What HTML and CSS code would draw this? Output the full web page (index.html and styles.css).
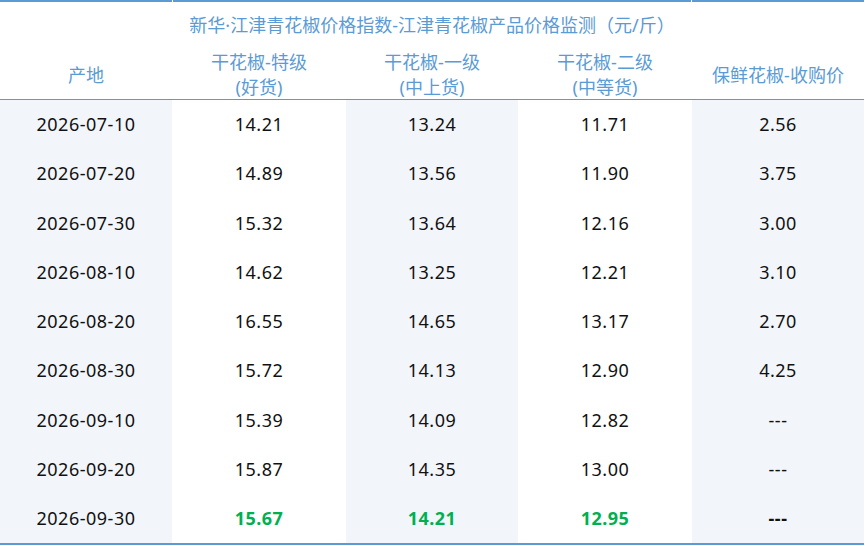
FILE: index.html
```html
<!DOCTYPE html>
<html lang="zh">
<head>
<meta charset="utf-8">
<link rel="stylesheet" href="styles.css">
</head>
<body>
<div class="table">
  <div class="head">
    <div class="hc h-origin">产地</div>
    <div class="hc h-title">新华·江津青花椒价格指数-江津青花椒产品价格监测（元/斤）</div>
    <div class="hc h-last">保鲜花椒-收购价</div>
    <div class="hc h-sub c2">干花椒-特级<br>(好货)</div>
    <div class="hc h-sub c3">干花椒-一级<br>(中上货)</div>
    <div class="hc h-sub c4">干花椒-二级<br>(中等货)</div>
  </div>
  <div class="body">
    <div class="c alt">2026-07-10</div><div class="c">14.21</div><div class="c alt">13.24</div><div class="c">11.71</div><div class="c alt">2.56</div>
    <div class="c alt">2026-07-20</div><div class="c">14.89</div><div class="c alt">13.56</div><div class="c">11.90</div><div class="c alt">3.75</div>
    <div class="c alt">2026-07-30</div><div class="c">15.32</div><div class="c alt">13.64</div><div class="c">12.16</div><div class="c alt">3.00</div>
    <div class="c alt">2026-08-10</div><div class="c">14.62</div><div class="c alt">13.25</div><div class="c">12.21</div><div class="c alt">3.10</div>
    <div class="c alt">2026-08-20</div><div class="c">16.55</div><div class="c alt">14.65</div><div class="c">13.17</div><div class="c alt">2.70</div>
    <div class="c alt">2026-08-30</div><div class="c">15.72</div><div class="c alt">14.13</div><div class="c">12.90</div><div class="c alt">4.25</div>
    <div class="c alt">2026-09-10</div><div class="c">15.39</div><div class="c alt">14.09</div><div class="c">12.82</div><div class="c alt">---</div>
    <div class="c alt">2026-09-20</div><div class="c">15.87</div><div class="c alt">14.35</div><div class="c">13.00</div><div class="c alt">---</div>
    <div class="c alt">2026-09-30</div><div class="c green">15.67</div><div class="c alt green">14.21</div><div class="c green">12.95</div><div class="c alt bold">---</div>
  </div>
</div>
</body>
</html>
```
FILE: styles.css
```css
html, body {
  margin: 0;
  padding: 0;
  background: #ffffff;
}
body {
  font-family: "Noto Sans", "Noto Sans CJK SC", sans-serif;
  color: #111111;
}
.table {
  width: 864px;
  border-bottom: 2px solid #5b9bd5;
}
.head {
  display: grid;
  grid-template-columns: repeat(5, 172px);
  grid-template-rows: 49px 50px;
  column-gap: 1px;
  border-bottom: 1px solid #5b9bd5;
  height: 99px;
}
.hc {
  display: flex;
  align-items: center;
  justify-content: center;
  text-align: center;
  color: #5b9bd5;
  font-size: 18px;
  line-height: 25px;
}
.h-origin {
  grid-column: 1;
  grid-row: 1 / 3;
  border-top: 2px solid #5b9bd5;
  padding-top: 50px;
  height: 47px;
  box-sizing: content-box;
}
.h-title {
  grid-column: 2 / 5;
  grid-row: 1;
  border-top: 2px solid #5b9bd5;
}
.h-last {
  grid-column: 5;
  grid-row: 1 / 3;
  border-top: 2px solid #5b9bd5;
  padding-top: 50px;
  height: 47px;
  box-sizing: content-box;
}
.h-sub { grid-row: 2; padding-top: 2px; }
.c2 { grid-column: 2; }
.c3 { grid-column: 3; }
.c4 { grid-column: 4; }
.body {
  display: grid;
  grid-template-columns: repeat(5, 172px);
  grid-auto-rows: 49.25px;
  column-gap: 1px;
}
.c {
  display: flex;
  align-items: center;
  justify-content: center;
  font-size: 18px;
  letter-spacing: 0.5px;
  padding-bottom: 1px;
  background: #ffffff;
}
.c.alt { background: #f2f6fb; }
.green {
  color: #00b050;
  font-weight: 700;
}
.bold { font-weight: 700; }
```
